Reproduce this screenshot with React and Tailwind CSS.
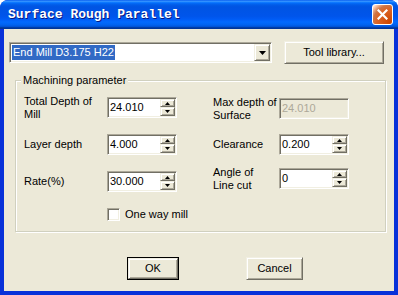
const sunken =
  "border border-t-[#ACA899] border-l-[#ACA899] border-b-white border-r-white shadow-[inset_1px_1px_0_#716F64,inset_-1px_-1px_0_#F1EFE2]";
const raised =
  "border border-t-[#F1EFE2] border-l-[#F1EFE2] border-b-[#716F64] border-r-[#716F64] shadow-[inset_1px_1px_0_#fff,inset_-1px_-1px_0_#ACA899] bg-[#ECE9D8]";

function Arrow({ up }) {
  return (
    <svg width="7" height="4" viewBox="0 0 7 4" className="block">
      {up ? <path d="M3.5 0 L7 4 L0 4 Z" fill="#000" /> : <path d="M0 0 L7 0 L3.5 4 Z" fill="#000" />}
    </svg>
  );
}

function SmallArrow({ up }) {
  return (
    <svg width="5" height="3" viewBox="0 0 5 3" className="block">
      {up ? <path d="M2.5 0 L5 3 L0 3 Z" fill="#000" /> : <path d="M0 0 L5 0 L2.5 3 Z" fill="#000" />}
    </svg>
  );
}

function Spin({ value, disabled }) {
  return (
    <div className={`${sunken} w-[70px] h-[21px] shrink-0 flex p-[1px] ${disabled ? "bg-[#ECE9D8]" : "bg-white"}`}>
      <div className={`flex-1 pl-[1px] leading-[17px] ${disabled ? "text-[#ACA899]" : "text-black"}`}>{value}</div>
      {!disabled && (
        <div className="w-[15px] flex flex-col">
          <div className={`${raised} h-[8px] flex items-center justify-center`}>
            <SmallArrow up />
          </div>
          <div className={`${raised} flex-1 flex items-center justify-center`}>
            <SmallArrow />
          </div>
        </div>
      )}
    </div>
  );
}

function Field({ label, value, labelW, disabled }) {
  return (
    <div className="flex items-center h-[21px]">
      <div className={`${labelW} shrink-0 leading-[13px]`}>{label}</div>
      <Spin value={value} disabled={disabled} />
    </div>
  );
}

function Button({ children, className, isDefault }) {
  return (
    <div className={`${isDefault ? "border border-black" : ""} ${className}`}>
      <div className={`${raised} w-full h-full flex items-center justify-center`}>{children}</div>
    </div>
  );
}

export default function App() {
  return (
    <div className="w-[398px] h-[295px] bg-white">
      <div
        className="w-[398px] h-[295px] flex flex-col rounded-t-[8px] bg-[#0831D9] text-[11px] text-black"
        style={{ fontFamily: '"Liberation Sans", Arial, sans-serif' }}
      >
        <div className="h-[29px] rounded-t-[8px] flex items-center pl-[8px] pr-[5px] bg-[linear-gradient(to_bottom,#0058EE_0%,#3A93FF_4%,#288EFF_6%,#127DFF_8%,#036FFC_10%,#0262EE_14%,#0057E5_20%,#0054E3_24%,#0055EB_56%,#005BF5_66%,#026AFE_76%,#0062EF_86%,#0052D6_92%,#0040AB_94%,#003092_100%)]">
          <div className="flex-1 text-white font-bold text-[13px] [font-family:'Liberation_Mono',monospace] [text-shadow:1px_1px_0_#0A1883]">
            Surface Rough Parallel
          </div>
          <div className="w-[21px] h-[21px] rounded-[3px] border border-white flex items-center justify-center bg-[radial-gradient(circle_at_90%_90%,#CC4600_0%,#DC6527_55%,#CD7546_70%,#ffccb2_90%,#fff_100%)]">
            <svg width="11" height="11" viewBox="0 0 11 11">
              <path d="M1.5 1.5 L9.5 9.5 M9.5 1.5 L1.5 9.5" stroke="#fff" strokeWidth="2.2" strokeLinecap="square" />
            </svg>
          </div>
        </div>

        <div className="flex-1 mx-[4px] mb-[4px] bg-[#ECE9D8] flex flex-col">
          <div className="mt-[12px] ml-[5px] flex items-center">
            <div className={`${sunken} bg-white w-[263px] h-[21px] flex items-center p-[1px]`}>
              <div className="flex-1 pl-[1px]">
                <span className="bg-[#316AC5] text-white px-[1px] leading-[15px] inline-block">End Mill D3.175 H22</span>
              </div>
              <div className={`${raised} w-[16px] h-full flex items-center justify-center`}>
                <Arrow />
              </div>
            </div>
            <Button className="ml-[12px] w-[100px] h-[23px]">Tool library...</Button>
          </div>

          <div className="ml-[11px] mt-[16px] w-[371px] h-[152px] border border-[#D0D0BF] shadow-[inset_1px_1px_0_#fff,1px_1px_0_#fff] flex flex-col">
            <div className="-mt-[7px] ml-[5px] px-[2px] w-fit bg-[#ECE9D8] leading-[13px]">Machining parameter</div>
            <div className="flex pl-[8px]">
              <div className="w-[153px] shrink-0 flex flex-col mt-[10px]">
                <Field label={<>Total Depth of<br />Mill</>} value="24.010" labelW="w-[83px]" />
                <div className="mt-[16px]">
                  <Field label="Layer depth" value="4.000" labelW="w-[83px]" />
                </div>
                <div className="mt-[16px]">
                  <Field label="Rate(%)" value="30.000" labelW="w-[83px]" />
                </div>
                <div className="mt-[14px] ml-[83px] flex items-center whitespace-nowrap">
                  <div className={`${sunken} bg-white w-[13px] h-[13px] shrink-0`} />
                  <div className="ml-[5px]">One way mill</div>
                </div>
              </div>
              <div className="flex flex-col mt-[11px] ml-[36px]">
                <Field label={<>Max depth of<br />Surface</>} value="24.010" labelW="w-[66px]" disabled />
                <div className="mt-[15px]">
                  <Field label="Clearance" value="0.200" labelW="w-[66px]" />
                </div>
                <div className="mt-[13px]">
                  <Field label={<>Angle of<br />Line cut</>} value="0" labelW="w-[66px]" />
                </div>
              </div>
            </div>
          </div>

          <div className="mt-[25px] flex">
            <Button isDefault className="ml-[123px] w-[52px] h-[23px]">OK</Button>
            <Button className="ml-[67px] w-[57px] h-[23px]">Cancel</Button>
          </div>
        </div>
      </div>
    </div>
  );
}
